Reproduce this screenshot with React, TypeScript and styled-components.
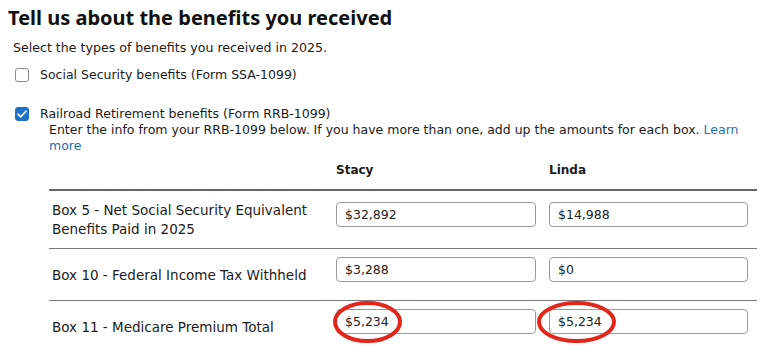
import React from "react";
import styled, { createGlobalStyle } from "styled-components";

const GlobalStyle = createGlobalStyle`
  html, body {
    margin: 0;
    padding: 0;
    background: #ffffff;
  }
  body {
    font-family: "DejaVu Sans", "Noto Sans", sans-serif;
    color: #1b1b1b;
  }
`;

const Page = styled.div`
  padding: 4px 10px 0 8px;
  width: 767px;
  box-sizing: border-box;
`;

const Title = styled.h1`
  margin: 0;
  font-family: "Noto Sans", "DejaVu Sans", sans-serif;
  font-size: 20px;
  line-height: 28px;
  font-weight: bold;
  color: #111;
`;

const Intro = styled.p`
  margin: 7px 0 0 5px;
  font-size: 12.6px;
  line-height: 18px;
`;

const Option = styled.label<{ $top: number }>`
  display: flex;
  align-items: flex-start;
  gap: 11px;
  margin: ${(p) => p.$top}px 0 0 7px;
  font-size: 12.5px;
  line-height: 18px;
`;

const Box = styled.span<{ $checked?: boolean }>`
  flex: none;
  width: 14px;
  height: 14px;
  box-sizing: border-box;
  border-radius: 3px;
  margin-top: 2px;
  border: 1px solid ${(p) => (p.$checked ? "#1d72c4" : "#8a8a8a")};
  background: ${(p) => (p.$checked ? "#1d72c4" : "#fff")};
  display: flex;
  align-items: center;
  justify-content: center;
`;

const OptionBody = styled.div`
  display: flex;
  flex-direction: column;
`;

const OptionTitle = styled.div`
  line-height: 17px;
`;

const Help = styled.p`
  margin: 0 0 0 9px;
  font-size: 12.5px;
  line-height: 16px;
  width: 708px;
`;

const Link = styled.a`
  color: #1f6fb2;
  text-decoration: none;
`;

const Table = styled.div`
  margin: 7px 0 0 41px;
  width: 708px;
`;

const Row = styled.div<{ $head?: boolean }>`
  display: grid;
  grid-template-columns: 271px 200px 199px;
  column-gap: 13px;
  align-items: center;
  padding: ${(p) => (p.$head ? "0 0 10px 3px" : "8px 0 7px 3px")};
  border-bottom: ${(p) => (p.$head ? "2px solid #666" : "1px solid #7a7a7a")};
  &:last-child {
    border-bottom: none;
  }
`;

const HeadCell = styled.div`
  font-size: 12px;
  font-weight: bold;
  line-height: 18px;
`;

const Label = styled.div`
  font-size: 13.5px;
  line-height: 19px;
  padding: 2px 0;
`;

const Cell = styled.div`
  position: relative;
  padding-bottom: 11px;
`;

const Input = styled.input`
  display: block;
  width: 100%;
  height: 25px;
  box-sizing: border-box;
  border: 1px solid #9a9a9a;
  border-radius: 4px;
  padding: 0 8px;
  font-family: "DejaVu Sans", "Noto Sans", sans-serif;
  font-size: 12.5px;
  color: #222;
  background: #fff;
`;

const Circle = styled.svg<{ $left: number; $width: number }>`
  position: absolute;
  top: -8px;
  left: ${(p) => p.$left}px;
  width: ${(p) => p.$width}px;
  height: 42px;
  pointer-events: none;
  overflow: visible;
`;

const Check = () => (
  <svg width="10" height="8" viewBox="0 0 10 8">
    <path d="M1 4.2 L3.8 6.8 L9 1.2" fill="none" stroke="#fff" strokeWidth="1.6" strokeLinecap="round" strokeLinejoin="round" />
  </svg>
);

const Ring = ({ left, width }: { left: number; width: number }) => (
  <Circle $left={left} $width={width} viewBox={`0 0 ${width} 42`}>
    <ellipse cx={width / 2} cy={21} rx={width / 2 - 2} ry={19} fill="none" stroke="#e3261c" strokeWidth="4" />
  </Circle>
);

const rows = [
  { label: "Box 5 - Net Social Security Equivalent Benefits Paid in 2025", stacy: "$32,892", linda: "$14,988" },
  { label: "Box 10 - Federal Income Tax Withheld", stacy: "$3,288", linda: "$0" },
  { label: "Box 11 - Medicare Premium Total", stacy: "$5,234", linda: "$5,234", ring: true },
];

export default function App() {
  return (
    <Page>
      <GlobalStyle />
      <Title>Tell us about the benefits you received</Title>
      <Intro>Select the types of benefits you received in 2025.</Intro>
      <Option $top={9}>
        <Box />
        <span>Social Security benefits (Form SSA-1099)</span>
      </Option>
      <Option $top={21}>
        <Box $checked>
          <Check />
        </Box>
        <OptionBody>
          <OptionTitle>Railroad Retirement benefits (Form RRB-1099)</OptionTitle>
          <Help>
            Enter the info from your RRB-1099 below. If you have more than one, add up the amounts for each box.{" "}
            <Link href="#">Learn more</Link>
          </Help>
        </OptionBody>
      </Option>
      <Table>
        <Row $head>
          <div />
          <HeadCell>Stacy</HeadCell>
          <HeadCell>Linda</HeadCell>
        </Row>
        {rows.map((r) => (
          <Row key={r.label}>
            <Label>{r.label}</Label>
            <Cell>
              <Input defaultValue={r.stacy} />
              {r.ring && <Ring left={-3} width={69} />}
            </Cell>
            <Cell>
              <Input defaultValue={r.linda} />
              {r.ring && <Ring left={-12} width={79} />}
            </Cell>
          </Row>
        ))}
      </Table>
    </Page>
  );
}
